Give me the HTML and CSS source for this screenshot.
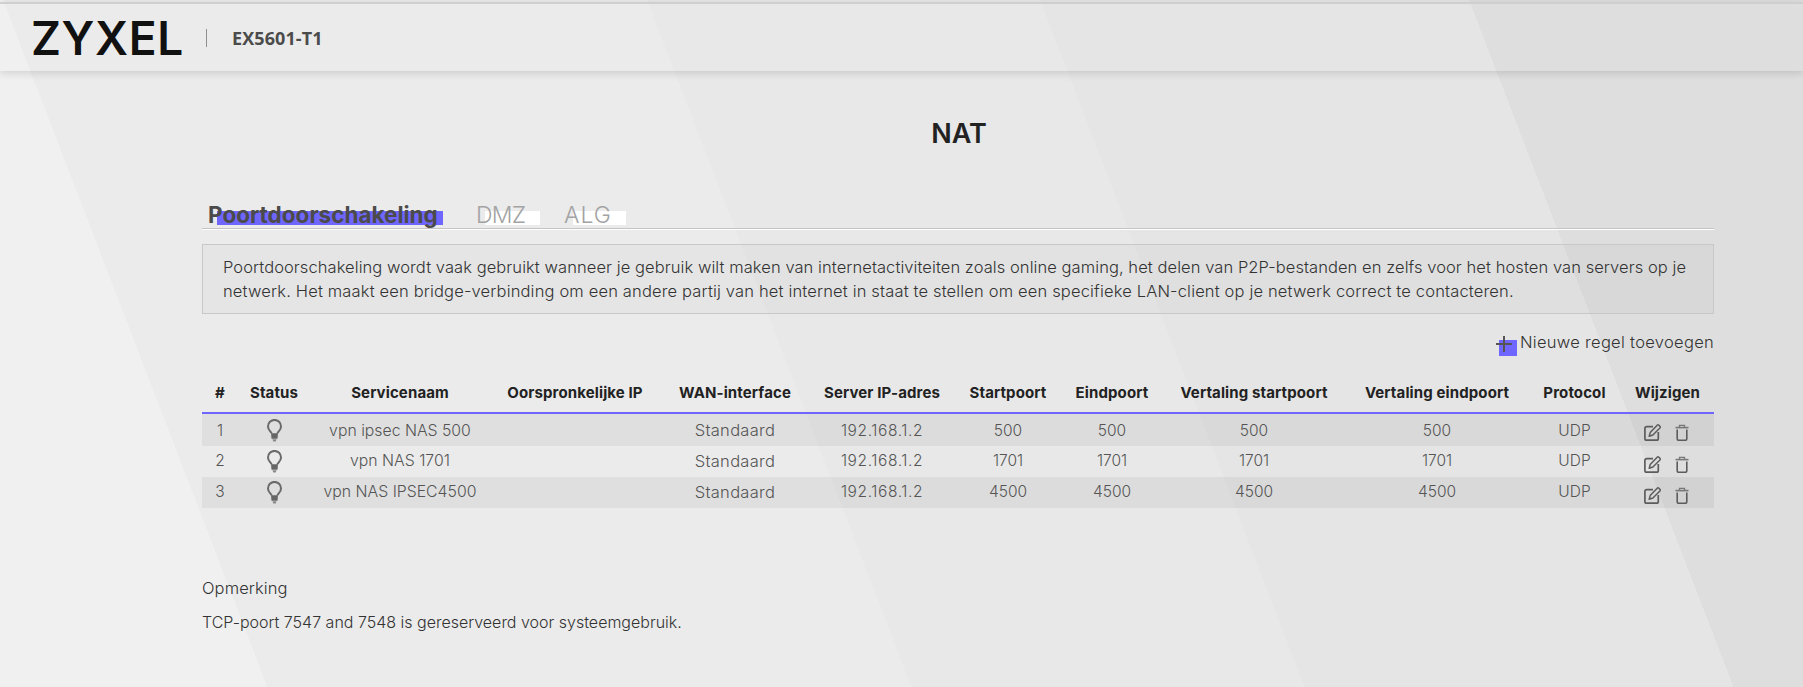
FILE: index.html
```html
<!DOCTYPE html>
<html lang="nl">
<head>
<meta charset="utf-8">
<title>NAT</title>
<link rel="stylesheet" href="styles.css">
</head>
<body>
<svg class="defs" width="0" height="0" aria-hidden="true">
  <symbol id="bulb" viewBox="0 0 15 23">
    <path d="M4.600 14.500C4.400 12.600 1 11.400 1 7.400a6.500 6.500 0 0 1 13 0c0 4-3.400 5.200-3.600 7.100" fill="none" stroke="#6a6a6a" stroke-width="2"/>
    <path d="M4 14.300h7l-.5 5.500H4.500z" fill="#666"/>
    <path d="M5.500 20.300h4L8.700 22.500H6.300z" fill="#888"/>
  </symbol>
  <symbol id="edit" viewBox="0 0 17 17">
    <path d="M9 2.700H2.600A1.700 1.700 0 0 0 .9 4.400v10a1.700 1.700 0 0 0 1.700 1.700h10a1.700 1.700 0 0 0 1.700-1.700V8" fill="none" stroke="#5c5c5c" stroke-width="1.700"/>
    <path d="M5.200 12.200l1-3.600L13.200 1.200q.9-.7 1.700 0l1 1q.7.9 0 1.800L8.900 11z" fill="none" stroke="#5c5c5c" stroke-width="1.500" stroke-linejoin="round"/>
  </symbol>
  <symbol id="trash" viewBox="0 0 14 17">
    <path d="M.5 3.600h13" stroke="#777" stroke-width="1.600" fill="none"/>
    <path d="M4.500 3.200V1.300h5v1.900" stroke="#777" stroke-width="1.300" fill="none"/>
    <path d="M2.200 5.500v9.300q0 1.500 1.500 1.500h6.600q1.500 0 1.500-1.500V5.500" stroke="#5c5c5c" stroke-width="1.600" fill="none"/>
  </symbol>
</svg>

<header class="topbar">
  <span class="logo">ZYXEL</span>
  <span class="divider"></span>
  <span class="model">EX5601-T1</span>
</header>

<main class="content">
  <h1 class="title">NAT</h1>

  <nav class="tabs">
    <a class="tab tab-active">Poortdoorschakeling</a>
    <a class="tab tab-dmz">DMZ</a>
    <a class="tab tab-alg">ALG</a>
  </nav>

  <p class="intro"><span class="intro-first">Poortdoorschakeling wordt vaak gebruikt wanneer je gebruik wilt maken van internetactiviteiten zoals online gaming, het delen van P2P-bestanden en zelfs voor het hosten van servers op je</span> <span class="intro-second">netwerk. Het maakt een bridge-verbinding om een andere partij van het internet in staat te stellen om een specifieke LAN-client op je netwerk correct te contacteren.</span></p>

  <div class="actions">
    <svg class="plus" width="21" height="20" viewBox="0 0 21 20" aria-hidden="true">
      <rect x="3" y="4" width="18" height="16" fill="#6f66ff"/>
      <path d="M0 8h16M8 0v16" stroke="#555" stroke-width="2" fill="none"/>
    </svg>
    <span class="add-label">Nieuwe regel toevoegen</span>
  </div>

  <table class="rules">
    <colgroup>
      <col class="c-num"><col class="c-status"><col class="c-name"><col class="c-orig"><col class="c-wan"><col class="c-ip"><col class="c-start"><col class="c-end"><col class="c-tstart"><col class="c-tend"><col class="c-proto"><col class="c-edit">
    </colgroup>
    <thead>
      <tr>
        <th>#</th><th>Status</th><th>Servicenaam</th><th>Oorspronkelijke IP</th><th>WAN-interface</th><th>Server IP-adres</th><th>Startpoort</th><th>Eindpoort</th><th>Vertaling startpoort</th><th>Vertaling eindpoort</th><th>Protocol</th><th>Wijzigen</th>
      </tr>
    </thead>
    <tbody>
      <tr>
        <td>1</td><td class="cell-icon"><svg class="ico-bulb"><use href="#bulb"/></svg></td><td class="cell-name">vpn ipsec NAS 500</td><td></td><td class="cell-wan">Standaard</td><td class="cell-ip">192.168.1.2</td><td>500</td><td>500</td><td>500</td><td>500</td><td>UDP</td>
        <td class="cell-icon"><span class="row-actions"><svg class="ico-edit"><use href="#edit"/></svg><svg class="ico-trash"><use href="#trash"/></svg></span></td>
      </tr>
      <tr>
        <td>2</td><td class="cell-icon"><svg class="ico-bulb"><use href="#bulb"/></svg></td><td class="cell-name">vpn NAS 1701</td><td></td><td class="cell-wan">Standaard</td><td class="cell-ip">192.168.1.2</td><td>1701</td><td>1701</td><td>1701</td><td>1701</td><td>UDP</td>
        <td class="cell-icon"><span class="row-actions"><svg class="ico-edit"><use href="#edit"/></svg><svg class="ico-trash"><use href="#trash"/></svg></span></td>
      </tr>
      <tr>
        <td>3</td><td class="cell-icon"><svg class="ico-bulb"><use href="#bulb"/></svg></td><td class="cell-name">vpn NAS IPSEC4500</td><td></td><td class="cell-wan">Standaard</td><td class="cell-ip">192.168.1.2</td><td>4500</td><td>4500</td><td>4500</td><td>4500</td><td>UDP</td>
        <td class="cell-icon"><span class="row-actions"><svg class="ico-edit"><use href="#edit"/></svg><svg class="ico-trash"><use href="#trash"/></svg></span></td>
      </tr>
    </tbody>
  </table>

  <p class="note-title">Opmerking</p>
  <p class="note-text">TCP-poort 7547 and 7548 is gereserveerd voor systeemgebruik.</p>
</main>
</body>
</html>
```

FILE: styles.css
```css
* { box-sizing: border-box; }

html, body { margin: 0; height: 100%; }

body {
  padding-top: 2px;
  overflow: hidden;
  font-family: "Inter", "Liberation Sans", sans-serif;
  font-size: 15px;
  color: #333;
  background: linear-gradient(68.95deg,
    #f0f0f0 0 249.6px,
    #ebebeb 249.6px 850.6px,
    #e8e8e8 850.6px 1217.4px,
    #e5e5e5 1217.4px 1617.8px,
    #dedede 1617.8px);
}

.defs { position: absolute; }

.topbar {
  height: 69px;
  border-top: 2px solid #cfcfcf;
  padding-left: 31px;
  display: flex;
  align-items: center;
  box-shadow: 0 2px 8px rgba(0, 0, 0, 0.14);
}

.logo {
  width: 175px;
  font-family: "Inter", sans-serif;
  font-weight: 600;
  font-size: 46px;
  line-height: 46px;
  letter-spacing: 0.6px;
  color: #111;
}

.divider {
  width: 1px;
  height: 18px;
  background: #8f8f8f;
}

.model {
  margin-left: 25px;
  font-family: "Open Sans", sans-serif;
  font-weight: 700;
  font-size: 18px;
  letter-spacing: 0.1px;
  color: #4b4b4b;
}

.content { padding: 0 89px 0 202px; }

.title {
  margin: 43px 0 0;
  padding-left: 2px;
  line-height: 40px;
  text-align: center;
  font-size: 27px;
  font-weight: 600;
  color: #222;
}

.tabs {
  margin-top: 50px;
  height: 25px;
  padding-left: 6px;
  display: flex;
  border-bottom: 1px solid #c4c4c4;
  box-shadow: 0 1px 0 #fff;
}

.tab {
  position: relative;
  isolation: isolate;
  line-height: 22px;
  font-size: 23px;
  color: #a3a3a3;
  font-weight: 300;
}

.tab::before {
  content: "";
  position: absolute;
  z-index: -1;
  top: 7px;
  height: 14px;
}

.tab-active {
  width: 268px;
  color: #4b4b4b;
  font-weight: 700;
  font-size: 22.500px;
}
.tab-active::before { left: 9px; width: 226px; background: #6f66ff; }

.tab-dmz { width: 88px; letter-spacing: -0.8px; }
.tab-dmz::before { left: 9px; width: 55px; background: #fff; }

.tab-alg { width: 62px; letter-spacing: 1px; }
.tab-alg::before { left: 9px; width: 53px; background: #fff; }

.intro {
  margin: 15px 0 0;
  padding: 10px 20px;
  border: 1px solid #c8c8c8;
  background: rgba(0, 0, 0, 0.025);
  line-height: 24px;
  font-size: 16.500px;
  font-weight: 300;
  white-space: nowrap;
}

.intro-first { display: block; letter-spacing: 0.07px; }
.intro-second { display: block; letter-spacing: 0.16px; }

.actions {
  margin-top: 16px;
  height: 24px;
  display: flex;
  justify-content: flex-end;
  gap: 3px;
}

.plus { margin-top: 6px; }

.add-label {
  line-height: 24px;
  font-size: 16.500px;
  letter-spacing: 0.3px;
  font-weight: 300;
}

.rules {
  margin-top: 18px;
  width: 100%;
  table-layout: fixed;
  border-collapse: separate;
  border-spacing: 0;
}

.c-num { width: 36px; }
.c-status { width: 72px; }
.c-name { width: 180px; }
.c-orig { width: 170px; }
.c-wan { width: 150px; }
.c-ip { width: 144px; }
.c-start { width: 108px; }
.c-end { width: 100px; }
.c-tstart { width: 184px; }
.c-tend { width: 182px; }
.c-proto { width: 93px; }
.c-edit { width: 93px; }

.rules th {
  height: 42px;
  padding: 0;
  border-bottom: 2px solid #6f66ff;
  font-size: 15px;
  letter-spacing: 0.12px;
  font-weight: 700;
  color: #222;
  white-space: nowrap;
}

.rules td {
  height: 31px;
  padding: 0;
  text-align: center;
  font-size: 15.500px;
  font-weight: 300;
  color: #555;
  white-space: nowrap;
}

.rules tbody tr:first-child td { height: 32px; }

.rules tbody tr + tr td:not(.cell-icon) { padding-bottom: 2px; }

.rules tbody tr:nth-child(odd) { background: rgba(0, 0, 0, 0.05); }

.rules .cell-name { font-size: 15.800px; }
.rules .cell-wan { font-size: 16.500px; letter-spacing: 0.3px; }
.rules .cell-ip { letter-spacing: 0.6px; }

.ico-bulb { display: block; width: 15px; height: 23px; margin: 0 auto; }

.row-actions {
  display: flex;
  justify-content: center;
  gap: 14px;
  padding: 5px 3px 0 0;
}

.ico-edit { width: 17px; height: 17px; }
.ico-trash { width: 14px; height: 17px; }

.note-title {
  margin: 68px 0 0;
  line-height: 24px;
  font-size: 16.500px;
  letter-spacing: 0.1px;
  font-weight: 300;
}

.note-text {
  margin: 10px 0 0;
  line-height: 24px;
  font-size: 16px;
  font-weight: 300;
}
```
